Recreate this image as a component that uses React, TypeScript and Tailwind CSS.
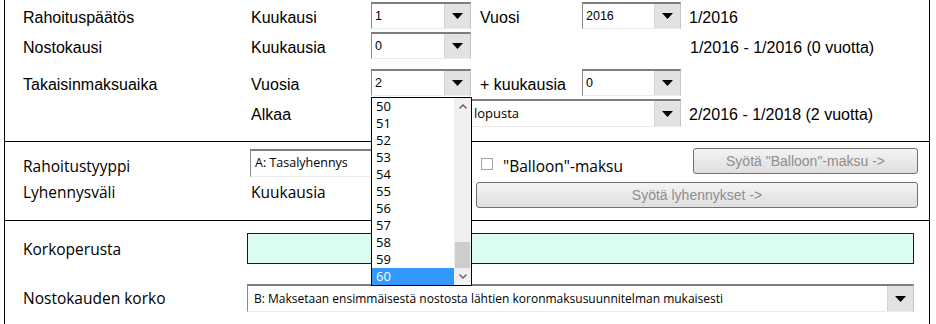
import React from "react";

const arial = "font-['Liberation_Sans',Arial,sans-serif]";
const segoe = "font-['Open_Sans',sans-serif]";

const Arrow = () => (
    <svg width="11" height="6" viewBox="0 0 11 6">
        <path d="M0 0H11L5.5 6Z" fill="#000" />
    </svg>
);

// sunken excel-style combo box
const Combo = ({
    text,
    className,
    textClass,
}: {
    text: string;
    className: string;
    textClass: string;
}) => {
    return (
        <div
            className={`flex border-t-2 border-l border-b border-r border-t-[#7d7d7d] border-l-[#8a8a8a] border-b-[#ececec] border-r-[#c4c4c4] bg-white ${className}`}
        >
            <div className={`flex flex-1 items-center overflow-hidden whitespace-nowrap text-black ${textClass}`}>
                {text}
            </div>
            <div className="flex w-[26px] items-center justify-center border-l border-[#d4d4d4] bg-[#e2e2e2]">
                <Arrow />
            </div>
        </div>
    );
};

const listItems = ["50", "51", "52", "53", "54", "55", "56", "57", "58", "59", "60"];

const DropList = () => {
    return (
        <div className="absolute left-[371px] top-[97px] flex h-[189px] w-[101px] border border-black bg-white">
            <div className="flex flex-1 flex-col">
                {listItems.map((item) => {
                    const selected = item === "60";
                    return (
                        <div
                            key={item}
                            className={`flex h-[17px] items-center pl-[4px] text-[13px] leading-[17px] ${segoe} ${
                                selected ? "bg-[#3399ff] text-white" : "text-black"
                            }`}
                        >
                            {item}
                        </div>
                    );
                })}
            </div>
            <div className="flex w-[17px] flex-col bg-[#f0f0f0]">
                <div className="flex h-[17px] items-center justify-center">
                    <svg width="8" height="5" viewBox="0 0 8 5">
                        <path d="M0.5 4.5L4 1L7.5 4.5" stroke="#606060" strokeWidth="1.4" fill="none" />
                    </svg>
                </div>
                <div className="flex flex-1 flex-col justify-end px-[1px]">
                    <div className="h-[26px] bg-[#cdcdcd]" />
                </div>
                <div className="flex h-[17px] items-center justify-center">
                    <svg width="8" height="5" viewBox="0 0 8 5">
                        <path d="M0.5 0.5L4 4L7.5 0.5" stroke="#606060" strokeWidth="1.4" fill="none" />
                    </svg>
                </div>
            </div>
        </div>
    );
};

const GrayButton = ({ label, className }: { label: string; className: string }) => (
    <div
        className={`flex items-center justify-center rounded-[3px] border border-[#707070] bg-gradient-to-b from-[#f4f4f4] to-[#dedede] text-[14px] text-[#8e8e8e] ${arial} ${className}`}
    >
        {label}
    </div>
);

const App = () => {
    const label = `pt-[4px] text-[16px] leading-[18px] text-black ${arial}`;
    const comboText = `pl-[3px] text-[12.5px] ${arial}`;
    const calibri = `text-[15.5px] leading-[20px] text-black ${segoe}`;

    return (
        <div className="relative h-[324px] w-[936px] overflow-hidden bg-white">
            <div className="ml-1 flex w-[926px] flex-col border-x border-black">
                {/* aikataulu */}
                <div className="flex h-[142px] flex-col border-b border-black pt-[2px]">
                    <div className="flex h-[27px] items-center">
                        <div className={`w-[246px] pl-[18px] ${label}`}>Rahoituspäätös</div>
                        <div className={`w-[120px] ${label}`}>Kuukausi</div>
                        <Combo text="1" className="h-full w-[100px]" textClass={comboText} />
                        <div className={`ml-[9px] w-[102px] ${label}`}>Vuosi</div>
                        <Combo text="2016" className="h-full w-[99px]" textClass={comboText} />
                        <div className={`ml-[8px] ${label}`}>1/2016</div>
                    </div>
                    <div className="mt-[3px] flex h-[27px] items-center">
                        <div className={`w-[246px] pl-[18px] ${label}`}>Nostokausi</div>
                        <div className={`w-[120px] ${label}`}>Kuukausia</div>
                        <Combo text="0" className="h-full w-[100px]" textClass={comboText} />
                        <div className="w-[211px]" />
                        <div className={`ml-[8px] ${label}`}>1/2016 - 1/2016 (0 vuotta)</div>
                    </div>
                    <div className="mt-[10px] flex h-[27px] items-center">
                        <div className={`w-[246px] pl-[18px] ${label}`}>Takaisinmaksuaika</div>
                        <div className={`w-[120px] ${label}`}>Vuosia</div>
                        <Combo text="2" className="h-full w-[100px]" textClass={comboText} />
                        <div className={`ml-[9px] w-[102px] ${label}`}>+ kuukausia</div>
                        <Combo text="0" className="h-full w-[99px]" textClass={comboText} />
                    </div>
                    <div className="mt-[3px] flex h-[28px] items-center">
                        <div className="w-[246px]" />
                        <div className={`w-[120px] ${label}`}>Alkaa</div>
                        <Combo
                            text="lopusta"
                            className="h-full w-[310px]"
                            textClass={`pl-[102px] text-[13px] ${segoe}`}
                        />
                        <div className={`ml-[8px] ${label}`}>2/2016 - 1/2018 (2 vuotta)</div>
                    </div>
                </div>

                {/* rahoitustyyppi */}
                <div className="flex h-[79px] flex-col border-b border-black pt-[6px]">
                    <div className="flex h-[30px] items-start">
                        <div className={`mt-[8px] w-[245px] pl-[18px] ${calibri}`}>Rahoitustyyppi</div>
                        <Combo
                            text="A: Tasalyhennys"
                            className="mt-[1px] h-[28px] w-[221px]"
                            textClass={`pl-[4px] text-[12.5px] ${segoe}`}
                        />
                        <div className="ml-[10px] mt-[10px] h-[12px] w-[12px] border border-[#a4a4a4] bg-white" />
                        <div className={`ml-[10px] mt-[8px] ${calibri}`}>"Balloon"-maksu</div>
                        <GrayButton label={'Syötä "Balloon"-maksu ->'} className="ml-auto mr-[11px] h-[26px] w-[225px]" />
                    </div>
                    <div className="mt-[4px] flex h-[26px] items-start">
                        <div className={`w-[246px] pl-[18px] ${calibri}`}>Lyhennysväli</div>
                        <div className={`w-[225px] ${calibri}`}>Kuukausia</div>
                        <GrayButton label="Syötä lyhennykset ->" className="mr-[11px] h-[26px] flex-1" />
                    </div>
                </div>

                {/* korko */}
                <div className="flex h-[103px] flex-col pt-[12px]">
                    <div className="flex h-[31px] items-center">
                        <div className={`w-[242px] pl-[18px] ${calibri}`}>Korkoperusta</div>
                        <div className="mr-[15px] h-full flex-1 border border-[#1a1a1a] bg-[#dbfdf0]" />
                    </div>
                    <div className="mt-[20px] flex h-[28px] items-center">
                        <div className={`w-[242px] pl-[18px] ${calibri}`}>Nostokauden korko</div>
                        <Combo
                            text="B: Maksetaan ensimmäisestä nostosta lähtien koronmaksusuunnitelman mukaisesti"
                            className="mr-[15px] h-full flex-1"
                            textClass={`pl-[6px] text-[12px] ${segoe}`}
                        />
                    </div>
                </div>
            </div>
            <DropList />
        </div>
    );
};

export default App;
